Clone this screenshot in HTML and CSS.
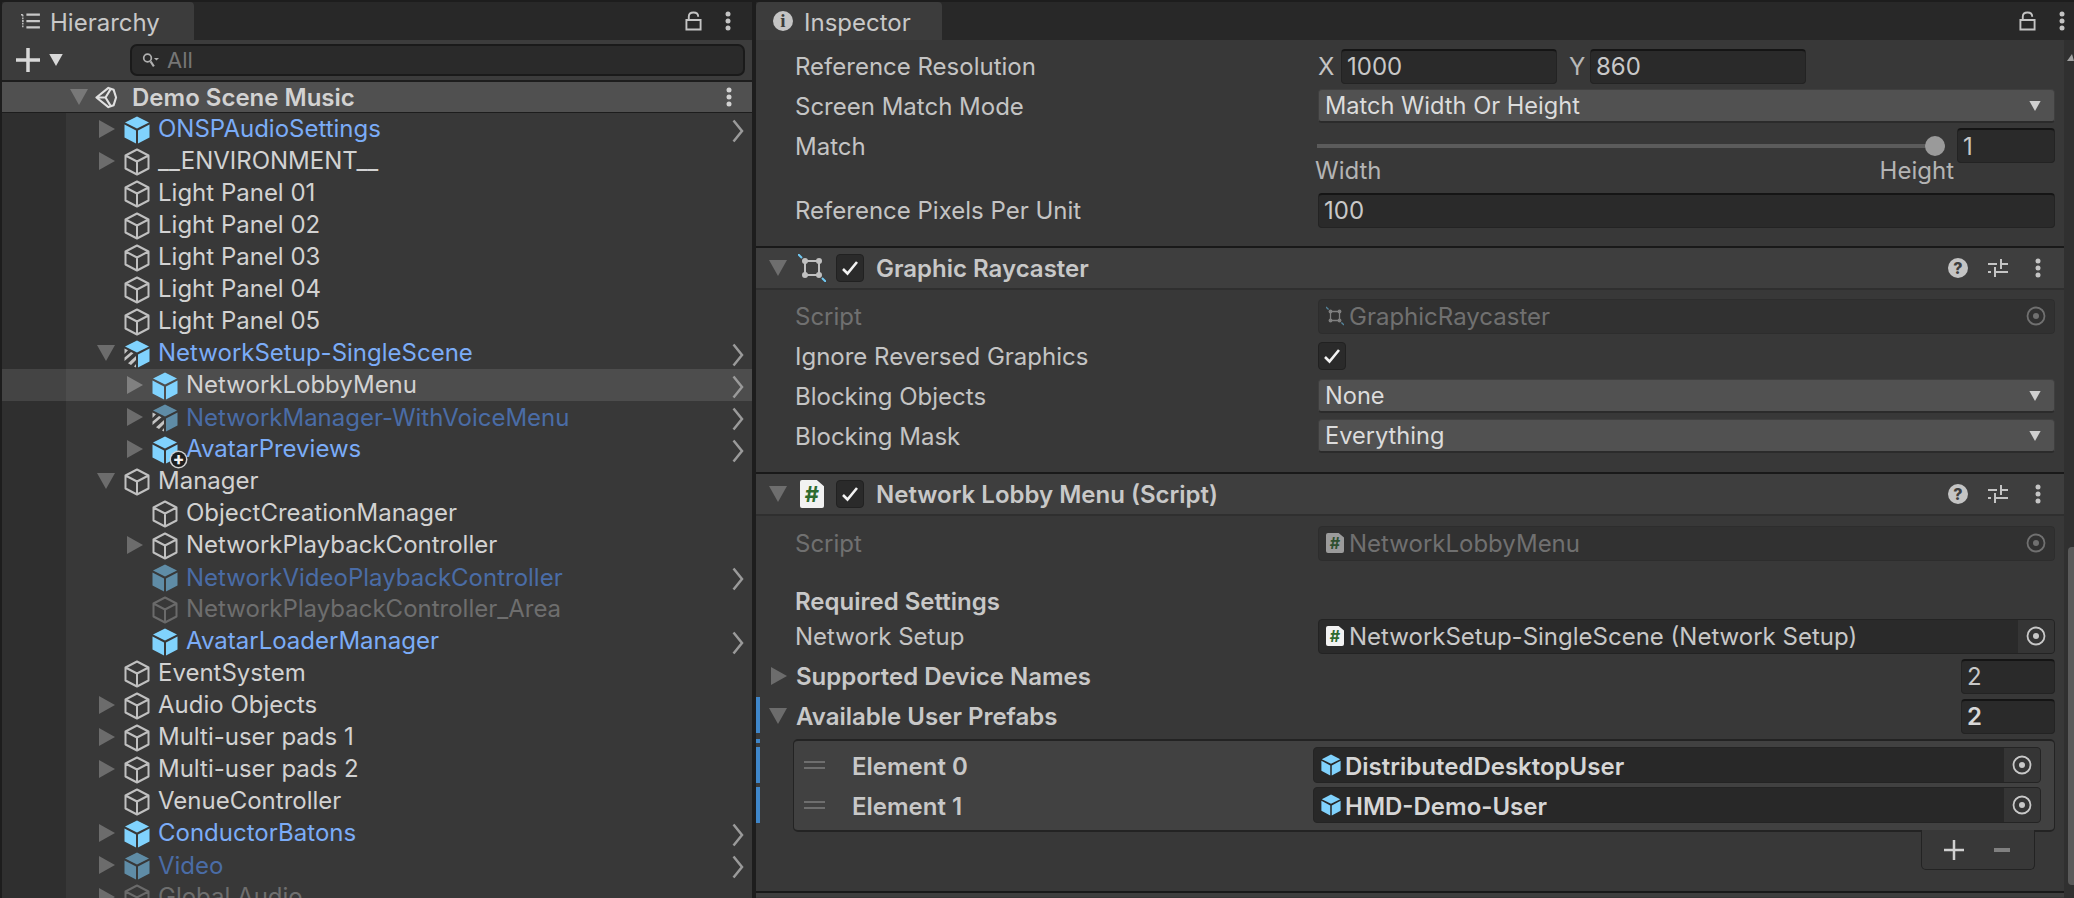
FILE: index.html
```html
<!DOCTYPE html>
<html lang="en">
  <head>
    <meta charset="UTF-8" />
    <title>Unity Editor - Hierarchy and Inspector</title>
    <link rel="stylesheet" href="styles.css">
  </head>

  <body>
    <svg class="icon-defs" aria-hidden="true">
      <symbol id="cube" viewBox="0 0 26 28">
        <path d="M13 1.5 24.5 7.5V20.5L13 26.5 1.5 20.5V7.5ZM1.5 7.5 13 13.5 24.5 7.5M13 13.5V26.5" fill="none" stroke="currentColor" stroke-width="2" stroke-linejoin="round"/>
      </symbol>
      <symbol id="cube-solid" viewBox="0 0 26 28">
        <path d="M13 .5 25 6.5 13 12.5 1 6.5Z" fill="currentColor"/>
        <path d="M.5 8.5 12 14.5V27.5L.5 21.5ZM25.5 8.5 14 14.5V27.5L25.5 21.5Z" fill="currentColor"/>
      </symbol>
      <symbol id="cube-variant" viewBox="0 0 26 28">
        <path d="M13 .5 25 6.5 13 12.5 1 6.5Z" fill="currentColor"/>
        <path d="M25.5 8.5 14 14.5V27.5L25.5 21.5Z" fill="currentColor"/>
        <path class="stripe" d="M.5 8.5 4 10.3.5 14ZM.5 17.5 7 11.9 9.5 13.2.5 21ZM4 23.3 12 16V20L7 24.9ZM10 26.5 12 24V27.5Z" fill="#c4c4c4"/>
      </symbol>
      <symbol id="tri-right" viewBox="0 0 16 18">
        <path d="M0 0 16 9 0 18Z" fill="currentColor"/>
      </symbol>
      <symbol id="tri-down" viewBox="0 0 18 16">
        <path d="M0 0H18L9 16Z" fill="currentColor"/>
      </symbol>
      <symbol id="chevron" viewBox="0 0 12 24">
        <path d="M1.5 1.5 10 12 1.5 22.5" fill="none" stroke="currentColor" stroke-width="2.5"/>
      </symbol>
      <symbol id="lock" viewBox="0 0 18 20">
        <path d="M4 9V5.5C4 2.5 6 1 9 1S14 2.5 14 5.5M1.5 9H16.5V19H1.5Z" fill="none" stroke="currentColor" stroke-width="2"/>
      </symbol>
      <symbol id="dots" viewBox="0 0 6 20">
        <circle cx="3" cy="3" r="2.5" fill="currentColor"/>
        <circle cx="3" cy="10" r="2.5" fill="currentColor"/>
        <circle cx="3" cy="17" r="2.5" fill="currentColor"/>
      </symbol>
      <symbol id="sliders" viewBox="0 0 20 20">
        <path d="M0 6H9M13 6H20M13 1V11M0 14H3M7 14H20M7 9V19" fill="none" stroke="currentColor" stroke-width="2"/>
      </symbol>
      <symbol id="target" viewBox="0 0 20 20">
        <circle cx="10" cy="10" r="8.5" fill="none" stroke="currentColor" stroke-width="1.8"/>
        <circle cx="10" cy="10" r="3" fill="currentColor"/>
      </symbol>
      <symbol id="check" viewBox="0 0 18 16">
        <path d="M2 9 6.5 13.5 16 2" fill="none" stroke="currentColor" stroke-width="2.6"/>
      </symbol>
      <symbol id="transform" viewBox="0 0 28 28">
        <path d="M7 7H21V21H7Z" fill="none" stroke="currentColor" stroke-width="2"/>
        <g fill="currentColor">
          <circle cx="7" cy="7" r="3"/>
          <circle cx="21" cy="7" r="3"/>
          <circle cx="7" cy="21" r="3"/>
          <circle cx="21" cy="21" r="3"/>
        </g>
        <path d="M0 0 4 4M24 24 28 28" stroke="#70c8f2" stroke-width="2"/>
      </symbol>
    </svg>

    <div class="editor">
      <section class="panel hierarchy">
        <div class="tabbar">
          <div class="tab hierarchy-tab">
            <svg class="tab-icon" viewBox="0 0 22 20">
              <path d="M7 3H22M7 10H22M7 17H22" stroke="currentColor" stroke-width="2.5"/>
              <path d="M1 3H4M3 3V17H4M3 10H4" fill="none" stroke="currentColor" stroke-width="1.5" stroke-dasharray="2 1"/>
            </svg>
            Hierarchy
          </div>
          <div class="tabbar-tools">
            <svg class="lock"><use href="#lock"/></svg>
            <svg class="dots"><use href="#dots"/></svg>
          </div>
        </div>

        <div class="toolbar">
          <svg class="add-icon" viewBox="0 0 24 24"><path d="M12 0V24M0 12H24" stroke="currentColor" stroke-width="3.5"/></svg>
          <svg class="add-arrow"><use href="#tri-down"/></svg>
          <div class="search">
            <svg class="search-icon" viewBox="0 0 20 20">
              <circle cx="6.5" cy="7" r="4.5" fill="none" stroke="currentColor" stroke-width="2"/>
              <path d="M10 11 14 17" stroke="currentColor" stroke-width="2.5"/>
              <path d="M14 7H20L17 10Z" fill="currentColor"/>
            </svg>
            All
          </div>
        </div>

        <div class="scene-header">
          <svg class="scene-arrow"><use href="#tri-down"/></svg>
          <svg class="unity-logo" viewBox="0 0 24 24">
            <path d="M2 12 14.5 2 20 4 22.5 12 20 20 14.5 22ZM2 12H11.5L17 3M11.5 12 17 21" fill="none" stroke="currentColor" stroke-width="2.2" stroke-linejoin="round"/>
          </svg>
          <span class="scene-name">Demo Scene Music</span>
          <svg class="dots scene-dots"><use href="#dots"/></svg>
        </div>

        <div class="tree">
          <div class="row depth1 prefab">
            <svg class="arrow"><use href="#tri-right"/></svg>
            <svg class="cube"><use href="#cube-solid"/></svg>
            <span class="name">ONSPAudioSettings</span>
            <svg class="chevron"><use href="#chevron"/></svg>
          </div>
          <div class="row depth1">
            <svg class="arrow"><use href="#tri-right"/></svg>
            <svg class="cube"><use href="#cube"/></svg>
            <span class="name">__ENVIRONMENT__</span>
          </div>
          <div class="row depth1">
            <span class="no-arrow"></span>
            <svg class="cube"><use href="#cube"/></svg>
            <span class="name">Light Panel 01</span>
          </div>
          <div class="row depth1">
            <span class="no-arrow"></span>
            <svg class="cube"><use href="#cube"/></svg>
            <span class="name">Light Panel 02</span>
          </div>
          <div class="row depth1">
            <span class="no-arrow"></span>
            <svg class="cube"><use href="#cube"/></svg>
            <span class="name">Light Panel 03</span>
          </div>
          <div class="row depth1">
            <span class="no-arrow"></span>
            <svg class="cube"><use href="#cube"/></svg>
            <span class="name">Light Panel 04</span>
          </div>
          <div class="row depth1">
            <span class="no-arrow"></span>
            <svg class="cube"><use href="#cube"/></svg>
            <span class="name">Light Panel 05</span>
          </div>
          <div class="row depth1 prefab">
            <svg class="arrow-open"><use href="#tri-down"/></svg>
            <svg class="cube"><use href="#cube-variant"/></svg>
            <span class="name">NetworkSetup-SingleScene</span>
            <svg class="chevron"><use href="#chevron"/></svg>
          </div>
          <div class="row depth2 prefab hovered">
            <svg class="arrow"><use href="#tri-right"/></svg>
            <svg class="cube"><use href="#cube-solid"/></svg>
            <span class="name">NetworkLobbyMenu</span>
            <svg class="chevron"><use href="#chevron"/></svg>
          </div>
          <div class="row depth2 prefab-off">
            <svg class="arrow"><use href="#tri-right"/></svg>
            <svg class="cube"><use href="#cube-variant"/></svg>
            <span class="name">NetworkManager-WithVoiceMenu</span>
            <svg class="chevron"><use href="#chevron"/></svg>
          </div>
          <div class="row depth2 prefab">
            <svg class="arrow"><use href="#tri-right"/></svg>
            <span class="cube-wrap">
              <svg class="cube"><use href="#cube-solid"/></svg>
              <span class="added-badge">+</span>
            </span>
            <span class="name">AvatarPreviews</span>
            <svg class="chevron"><use href="#chevron"/></svg>
          </div>
          <div class="row depth1">
            <svg class="arrow-open"><use href="#tri-down"/></svg>
            <svg class="cube"><use href="#cube"/></svg>
            <span class="name">Manager</span>
          </div>
          <div class="row depth2">
            <span class="no-arrow"></span>
            <svg class="cube"><use href="#cube"/></svg>
            <span class="name">ObjectCreationManager</span>
          </div>
          <div class="row depth2">
            <svg class="arrow"><use href="#tri-right"/></svg>
            <svg class="cube"><use href="#cube"/></svg>
            <span class="name">NetworkPlaybackController</span>
          </div>
          <div class="row depth2 prefab-off">
            <span class="no-arrow"></span>
            <svg class="cube"><use href="#cube-solid"/></svg>
            <span class="name">NetworkVideoPlaybackController</span>
            <svg class="chevron"><use href="#chevron"/></svg>
          </div>
          <div class="row depth2 inactive">
            <span class="no-arrow"></span>
            <svg class="cube"><use href="#cube"/></svg>
            <span class="name">NetworkPlaybackController_Area</span>
          </div>
          <div class="row depth2 prefab">
            <span class="no-arrow"></span>
            <svg class="cube"><use href="#cube-solid"/></svg>
            <span class="name">AvatarLoaderManager</span>
            <svg class="chevron"><use href="#chevron"/></svg>
          </div>
          <div class="row depth1">
            <span class="no-arrow"></span>
            <svg class="cube"><use href="#cube"/></svg>
            <span class="name">EventSystem</span>
          </div>
          <div class="row depth1">
            <svg class="arrow"><use href="#tri-right"/></svg>
            <svg class="cube"><use href="#cube"/></svg>
            <span class="name">Audio Objects</span>
          </div>
          <div class="row depth1">
            <svg class="arrow"><use href="#tri-right"/></svg>
            <svg class="cube"><use href="#cube"/></svg>
            <span class="name">Multi-user pads 1</span>
          </div>
          <div class="row depth1">
            <svg class="arrow"><use href="#tri-right"/></svg>
            <svg class="cube"><use href="#cube"/></svg>
            <span class="name">Multi-user pads 2</span>
          </div>
          <div class="row depth1">
            <span class="no-arrow"></span>
            <svg class="cube"><use href="#cube"/></svg>
            <span class="name">VenueController</span>
          </div>
          <div class="row depth1 prefab">
            <svg class="arrow"><use href="#tri-right"/></svg>
            <svg class="cube"><use href="#cube-solid"/></svg>
            <span class="name">ConductorBatons</span>
            <svg class="chevron"><use href="#chevron"/></svg>
          </div>
          <div class="row depth1 prefab-off">
            <svg class="arrow"><use href="#tri-right"/></svg>
            <svg class="cube"><use href="#cube-solid"/></svg>
            <span class="name">Video</span>
            <svg class="chevron"><use href="#chevron"/></svg>
          </div>
          <div class="row depth1 inactive">
            <svg class="arrow"><use href="#tri-right"/></svg>
            <svg class="cube"><use href="#cube"/></svg>
            <span class="name">Global Audio</span>
          </div>
        </div>
      </section>

      <section class="panel inspector">
        <div class="tabbar">
          <div class="tab inspector-tab">
            <span class="info-icon">i</span>
            Inspector
          </div>
          <div class="tabbar-tools">
            <svg class="lock"><use href="#lock"/></svg>
            <svg class="dots"><use href="#dots"/></svg>
          </div>
        </div>

        <div class="inspector-body">
          <div class="inspector-content">
            <div class="prop first-prop">
              <span class="label">Reference Resolution</span>
              <div class="value xy">
                <span class="axis">X</span>
                <span class="field axis-field">1000</span>
                <span class="axis axis-y">Y</span>
                <span class="field axis-field">860</span>
              </div>
            </div>
            <div class="prop">
              <span class="label">Screen Match Mode</span>
              <div class="value"><div class="dropdown">Match Width Or Height<svg class="drop-arrow"><use href="#tri-down"/></svg></div></div>
            </div>
            <div class="prop match-row">
              <span class="label">Match</span>
              <div class="value slider-wrap">
                <div class="slider-top">
                  <div class="slider-track"><span class="slider-thumb"></span></div>
                  <span class="field slider-field">1</span>
                </div>
                <div class="slider-labels"><span>Width</span><span>Height</span></div>
              </div>
            </div>
            <div class="prop">
              <span class="label">Reference Pixels Per Unit</span>
              <div class="value"><span class="field">100</span></div>
            </div>

            <div class="component first-component">
              <div class="component-header">
                <svg class="comp-arrow"><use href="#tri-down"/></svg>
                <svg class="comp-icon"><use href="#transform"/></svg>
                <span class="checkbox"><svg><use href="#check"/></svg></span>
                <span class="comp-title">Graphic Raycaster</span>
                <div class="comp-tools">
                  <span class="help-icon">?</span>
                  <svg class="sliders"><use href="#sliders"/></svg>
                  <svg class="dots"><use href="#dots"/></svg>
                </div>
              </div>
              <div class="prop comp-first disabled">
                <span class="label">Script</span>
                <div class="value">
                  <div class="object-field">
                    <svg class="field-transform"><use href="#transform"/></svg>
                    <span class="object-name">GraphicRaycaster</span>
                    <span class="target-btn"><svg><use href="#target"/></svg></span>
                  </div>
                </div>
              </div>
              <div class="prop">
                <span class="label">Ignore Reversed Graphics</span>
                <div class="value"><span class="checkbox"><svg><use href="#check"/></svg></span></div>
              </div>
              <div class="prop">
                <span class="label">Blocking Objects</span>
                <div class="value"><div class="dropdown">None<svg class="drop-arrow"><use href="#tri-down"/></svg></div></div>
              </div>
              <div class="prop">
                <span class="label">Blocking Mask</span>
                <div class="value"><div class="dropdown">Everything<svg class="drop-arrow"><use href="#tri-down"/></svg></div></div>
              </div>
            </div>

            <div class="component second-component">
              <div class="component-header">
                <svg class="comp-arrow"><use href="#tri-down"/></svg>
                <span class="script-icon comp-script">#</span>
                <span class="checkbox"><svg><use href="#check"/></svg></span>
                <span class="comp-title">Network Lobby Menu (Script)</span>
                <div class="comp-tools">
                  <span class="help-icon">?</span>
                  <svg class="sliders"><use href="#sliders"/></svg>
                  <svg class="dots"><use href="#dots"/></svg>
                </div>
              </div>
              <div class="prop script-row disabled">
                <span class="label">Script</span>
                <div class="value">
                  <div class="object-field">
                    <span class="script-icon">#</span>
                    <span class="object-name">NetworkLobbyMenu</span>
                    <span class="target-btn"><svg><use href="#target"/></svg></span>
                  </div>
                </div>
              </div>
              <div class="section-title">Required Settings</div>
              <div class="prop">
                <span class="label">Network Setup</span>
                <div class="value">
                  <div class="object-field">
                    <span class="script-icon">#</span>
                    <span class="object-name">NetworkSetup-SingleScene (Network Setup)</span>
                    <span class="target-btn"><svg><use href="#target"/></svg></span>
                  </div>
                </div>
              </div>
              <div class="prop foldout">
                <svg class="fold-arrow"><use href="#tri-right"/></svg>
                <span class="label">Supported Device Names</span>
                <span class="field size-field">2</span>
              </div>
              <div class="prop foldout changed">
                <svg class="fold-arrow-open"><use href="#tri-down"/></svg>
                <span class="label">Available User Prefabs</span>
                <span class="field size-field size-changed">2</span>
              </div>
              <div class="list-box">
                <div class="list-row">
                  <span class="handle"></span>
                  <span class="element-name">Element 0</span>
                  <div class="object-field list-field">
                    <svg class="cube"><use href="#cube-solid"/></svg>
                    <span class="object-name">DistributedDesktopUser</span>
                    <span class="target-btn"><svg><use href="#target"/></svg></span>
                  </div>
                </div>
                <div class="list-row">
                  <span class="handle"></span>
                  <span class="element-name">Element 1</span>
                  <div class="object-field list-field">
                    <svg class="cube"><use href="#cube-solid"/></svg>
                    <span class="object-name">HMD-Demo-User</span>
                    <span class="target-btn"><svg><use href="#target"/></svg></span>
                  </div>
                </div>
              </div>
              <div class="list-footer">
                <svg class="foot-plus" viewBox="0 0 20 20"><path d="M10 0V20M0 10H20" stroke="currentColor" stroke-width="2.5"/></svg>
                <span class="foot-minus"></span>
              </div>
            </div>
            <div class="component-end"></div>
          </div>
          <div class="scrollbar">
            <span class="scroll-up"></span>
            <span class="scroll-thumb"></span>
          </div>
        </div>
      </section>
    </div>
  </body>
</html>
```

FILE: styles.css
```css
* {
  box-sizing: border-box;
}

body {
  margin: 0;
  height: 898px;
  overflow: hidden;
  background-color: #1d1d1d;
  font-family: Inter, "Noto Sans", sans-serif;
  font-size: 24px;
  color: #c4c4c4;
}

.icon-defs {
  display: none;
}

.editor {
  display: flex;
  gap: 4px;
  height: 898px;
  padding: 2px 0 0 2px;
}

.panel {
  display: flex;
  flex-direction: column;
  min-width: 0;
}

.hierarchy {
  width: 750px;
  flex: none;
}

.inspector {
  flex: 1;
}

/* tabs */

.tabbar {
  display: flex;
  align-items: stretch;
  justify-content: space-between;
  height: 38px;
  flex: none;
  background-color: #282828;
  color: #c4c4c4;
}

.tab {
  display: flex;
  align-items: center;
  padding-top: 3px;
  background-color: #3c3c3c;
  border-radius: 4px 4px 0 0;
  color: #c8c8c8;
}

.hierarchy-tab {
  width: 192px;
  padding-left: 17px;
  gap: 9px;
}

.inspector-tab {
  width: 186px;
  padding-left: 17px;
  gap: 11px;
}

.tab-icon {
  width: 22px;
  height: 18px;
  margin-bottom: 3px;
}

.info-icon {
  display: flex;
  align-items: center;
  justify-content: center;
  width: 20px;
  height: 20px;
  margin-bottom: 3px;
  border-radius: 50%;
  background-color: #c4c4c4;
  color: #3c3c3c;
  font-family: "Liberation Serif", serif;
  font-size: 19px;
  font-weight: bold;
}

.tabbar-tools {
  display: flex;
  align-items: center;
  gap: 23px;
  padding-right: 21px;
}

.inspector .tabbar-tools {
  padding-right: 9px;
}

.lock {
  width: 17px;
  height: 20px;
}

.dots {
  width: 6px;
  height: 20px;
}

/* hierarchy */

.toolbar {
  display: flex;
  align-items: center;
  height: 40px;
  flex: none;
  padding-left: 14px;
  background-color: #3c3c3c;
  color: #d8d8d8;
}

.add-icon {
  width: 24px;
  height: 24px;
}

.add-arrow {
  width: 16px;
  height: 12px;
  margin-left: 8px;
}

.search {
  display: flex;
  align-items: center;
  gap: 7px;
  width: 615px;
  height: 32px;
  margin-left: 66px;
  padding-left: 9px;
  background-color: #2a2a2a;
  border: 2px solid #1a1a1a;
  border-radius: 7px;
  color: #767676;
  font-size: 22px;
}

.search-icon {
  width: 19px;
  height: 17px;
  color: #b0b0b0;
}

.scene-header {
  display: flex;
  align-items: center;
  height: 30px;
  flex: none;
  margin-top: 2px;
  padding-left: 68px;
  background-color: #505050;
  color: #d2d2d2;
}

.scene-arrow {
  width: 18px;
  height: 16px;
  color: #787878;
}

.unity-logo {
  width: 24px;
  height: 23px;
  margin-left: 6px;
  color: #e0e0e0;
}

.scene-name {
  margin-left: 14px;
  font-weight: 600;
}

.scene-dots {
  margin-left: auto;
  margin-right: 20px;
}

.tree {
  flex: 1;
  margin-top: 1px;
  overflow: hidden;
  background: linear-gradient(to right, #2f2f2f 64px, #383838 64px);
}

.row {
  display: flex;
  align-items: center;
  height: 32px;
  color: #d2d2d2;
}

.depth1 {
  padding-left: 97px;
}

.depth2 {
  padding-left: 125px;
}

.row.hovered {
  background: linear-gradient(to right, #444444 64px, #4d4d4d 64px);
}

.arrow,
.no-arrow {
  width: 16px;
  height: 18px;
  flex: none;
  color: #6c6c6c;
}

.arrow-open {
  width: 18px;
  height: 16px;
  margin-left: -2px;
  flex: none;
  color: #6c6c6c;
}

.row.hovered .arrow {
  color: #808080;
}

.cube {
  width: 26px;
  height: 28px;
  flex: none;
  margin-left: 9px;
  margin-top: 2px;
  color: #c0c0c0;
}

.cube-wrap {
  position: relative;
  display: flex;
}

.added-badge {
  position: absolute;
  right: -8px;
  bottom: -3px;
  display: flex;
  align-items: center;
  justify-content: center;
  width: 15px;
  height: 15px;
  border-radius: 50%;
  background-color: #1e1e1e;
  box-shadow: 0 0 0 1.5px #d0d0d0;
  color: #f0f0f0;
  font-size: 17px;
  font-weight: 800;
  line-height: 1;
}

.name {
  margin-left: 8px;
  padding-bottom: 2px;
  white-space: nowrap;
}

.chevron {
  width: 12px;
  height: 24px;
  flex: none;
  margin-left: auto;
  margin-right: 8px;
  margin-top: 4px;
  color: #9a9a9a;
}

.prefab {
  color: #7bacf7;
}

.prefab .cube {
  color: #80d2fd;
}

.prefab.hovered {
  color: #d2d2d2;
}

.prefab-off {
  color: #4a6ca6;
}

.prefab-off .cube {
  color: #5f8ca6;
}

.prefab-off .name {
  padding-bottom: 0;
  padding-top: 1px;
}

.prefab-off .stripe {
  opacity: 0.6;
}

.inactive {
  color: #6e6e6e;
}

.inactive .cube {
  color: #6a6a6a;
}

/* inspector */

.inspector-body {
  flex: 1;
  display: flex;
  min-height: 0;
  background-color: #383838;
}

.inspector-content {
  flex: 1;
  min-width: 0;
}

.prop {
  position: relative;
  display: flex;
  align-items: center;
  height: 40px;
  padding-left: 39px;
  padding-right: 9px;
}

.first-prop {
  margin-top: 6px;
}

.label {
  width: 523px;
  flex: none;
  white-space: nowrap;
}

.value {
  flex: 1;
  min-width: 0;
  display: flex;
  align-items: center;
}

.field {
  display: flex;
  align-items: center;
  width: 100%;
  height: 35px;
  padding-left: 5px;
  background-color: #2a2a2a;
  border: 1px solid #232323;
  border-top: 2px solid #151515;
  border-radius: 4px;
  color: #c8c8c8;
}

.xy .axis {
  width: 23px;
  flex: none;
}

.xy .axis-y {
  width: 33px;
  padding-left: 12px;
  color: #b8b8b8;
}

.xy .axis-field {
  width: 216px;
  flex: none;
}

.dropdown {
  display: flex;
  align-items: center;
  justify-content: space-between;
  width: 100%;
  height: 34px;
  padding: 0 12px 0 6px;
  background-color: #515151;
  border: 1px solid #3f3f3f;
  border-bottom: 2px solid #2b2b2b;
  border-radius: 4px;
  font-size: 23.6px;
  color: #dcdcdc;
}

.drop-arrow {
  width: 14px;
  height: 10px;
  color: #d0d0d0;
}

.match-row {
  height: 64px;
  align-items: flex-start;
  padding-top: 2px;
}

.match-row .label {
  line-height: 38px;
}

.slider-wrap {
  flex-direction: column;
  align-items: stretch;
}

.slider-top {
  display: flex;
  align-items: center;
  gap: 12px;
}

.slider-track {
  position: relative;
  flex: 1;
  height: 4px;
  margin-left: -1px;
  background-color: #5b5b5b;
}

.slider-thumb {
  position: absolute;
  right: 0;
  top: -8px;
  width: 20px;
  height: 20px;
  border-radius: 50%;
  background-color: #9a9a9a;
}

.slider-field {
  width: 98px;
  flex: none;
}

.slider-labels {
  display: flex;
  justify-content: space-between;
  margin-left: -3px;
  padding-right: 101px;
  line-height: 16px;
  color: #b4b4b4;
}

.component {
  border-top: 2px solid #191919;
}

.first-component {
  margin-top: 16px;
}

.second-component {
  margin-top: 16px;
}

.component-header {
  display: flex;
  align-items: center;
  height: 42px;
  padding: 0 23px 0 13px;
  background-color: #3e3e3e;
  border-bottom: 2px solid #2f2f2f;
}

.comp-arrow {
  width: 18px;
  height: 16px;
  flex: none;
  color: #6e6e6e;
}

.comp-icon {
  width: 28px;
  height: 28px;
  margin-left: 11px;
  color: #c0c0c0;
}

.component-header .comp-script {
  margin-left: 13px;
  width: 24px;
  height: 28px;
  font-size: 22px;
}

.component-header .comp-script + .checkbox {
  margin-left: 12px;
}

.component-header .checkbox {
  margin-left: 10px;
}

.comp-title {
  margin-left: 12px;
  font-weight: 600;
  color: #c8c8c8;
}

.comp-tools {
  display: flex;
  align-items: center;
  gap: 20px;
  margin-left: auto;
}

.comp-tools .dots {
  margin-left: 7px;
}

.help-icon {
  display: flex;
  align-items: center;
  justify-content: center;
  width: 20px;
  height: 20px;
  border-radius: 50%;
  background-color: #c4c4c4;
  color: #3e3e3e;
  font-size: 16px;
  font-weight: 800;
}

.sliders {
  width: 20px;
  height: 20px;
}

.checkbox {
  display: flex;
  align-items: center;
  justify-content: center;
  width: 28px;
  height: 28px;
  flex: none;
  background-color: #2a2a2a;
  border: 1px solid #212121;
  border-radius: 4px;
  color: #f2f2f2;
}

.checkbox svg {
  width: 18px;
  height: 16px;
}

.comp-first {
  margin-top: 6px;
}

.object-field {
  display: flex;
  align-items: center;
  width: 100%;
  height: 35px;
  padding-left: 7px;
  background-color: #2a2a2a;
  border: 1px solid #232323;
  border-radius: 4px;
  color: #c8c8c8;
  overflow: hidden;
}

.object-name {
  margin-left: 5px;
  white-space: nowrap;
}

.target-btn {
  display: flex;
  align-items: center;
  justify-content: center;
  width: 36px;
  height: 100%;
  margin-left: auto;
  flex: none;
  background-color: #353535;
  color: #c8c8c8;
}

.target-btn svg {
  width: 20px;
  height: 20px;
}

.disabled .label,
.disabled .object-name {
  color: #707070;
}

.disabled .object-field {
  background-color: #313131;
  border-color: #2d2d2d;
}

.disabled .target-btn {
  background-color: #313131;
  color: #707070;
}

.disabled .script-icon,
.field-transform {
  opacity: 0.55;
}

.field-transform {
  width: 18px;
  height: 20px;
  color: #c0c0c0;
}

.script-icon {
  display: flex;
  align-items: center;
  justify-content: center;
  width: 18px;
  height: 20px;
  flex: none;
  background-color: #f2f2f2;
  clip-path: polygon(0 0, 70% 0, 100% 22%, 100% 100%, 0 100%);
  border-radius: 2px;
  color: #2f6b2f;
  font-size: 16px;
  font-weight: 700;
}

.script-row {
  margin-top: 7px;
}

.section-title {
  display: flex;
  align-items: flex-end;
  height: 53px;
  padding-left: 39px;
  font-weight: 600;
  line-height: 28px;
  color: #c8c8c8;
}

.foldout {
  padding-left: 25px;
}

.foldout .label {
  width: auto;
  margin-left: 7px;
  font-weight: 600;
  color: #c8c8c8;
}

.fold-arrow {
  width: 16px;
  height: 18px;
  flex: none;
  margin-left: -10px;
  margin-right: 2px;
  color: #6c6c6c;
}

.fold-arrow-open {
  width: 18px;
  height: 16px;
  flex: none;
  margin-left: -12px;
  margin-right: 2px;
  color: #6c6c6c;
}

.foldout .size-field {
  width: 94px;
  flex: none;
  margin-left: auto;
}

.size-changed {
  font-weight: 600;
  color: #d8d8d8;
}

/* override bars on the left edge */

.changed::before,
.list-box::before,
.list-row::before {
  content: "";
  position: absolute;
  width: 4px;
  background-color: #3f86c9;
}

.changed::before {
  left: 0;
  top: 1px;
  bottom: 3px;
}

.list-box {
  position: relative;
  display: flex;
  flex-direction: column;
  gap: 4px;
  height: 93px;
  margin: 3px 9px 0 37px;
  padding: 6px 13px 7px 0;
  background-color: #414141;
  border: 1px solid #232323;
  border-width: 2px 1px;
  border-radius: 5px;
}

.list-box::before {
  left: -38px;
  top: -2px;
  height: 4px;
}

.list-row {
  position: relative;
  display: flex;
  align-items: center;
  height: 36px;
}

.list-row::before {
  left: -38px;
  top: 0;
  bottom: 0;
}

.handle {
  width: 21px;
  height: 8px;
  flex: none;
  margin-left: 10px;
  border-top: 2px solid #6e6e6e;
  border-bottom: 2px solid #6e6e6e;
}

.element-name {
  flex: 1;
  margin-left: 27px;
  padding-top: 2px;
  font-weight: 600;
  color: #c8c8c8;
}

.list-field {
  width: 728px;
  height: 36px;
  flex: none;
  padding-left: 7px;
  background-color: #282828;
  border-color: #242424;
  font-weight: 600;
  color: #d6d6d6;
}

.list-field .cube {
  width: 20px;
  height: 22px;
  margin-left: 0;
  margin-top: 0;
  color: #80d2fd;
}

.list-field .object-name {
  margin-left: 4px;
  padding-top: 2px;
}

.list-footer {
  position: relative;
  z-index: 1;
  display: flex;
  align-items: center;
  gap: 30px;
  width: 114px;
  height: 40px;
  margin: -2px 29px 0 auto;
  padding-left: 22px;
  background-color: #383838;
  border: 1px solid #232323;
  border-top: 0;
  border-radius: 0 0 5px 5px;
}

.foot-plus {
  width: 20px;
  height: 20px;
  color: #d0d0d0;
}

.foot-minus {
  width: 16px;
  height: 4px;
  background-color: #808080;
}

.component-end {
  height: 6px;
  margin-top: 21px;
  background-color: #3e3e3e;
  border-top: 2px solid #191919;
}

/* scrollbar */

.scrollbar {
  display: flex;
  flex-direction: column;
  align-items: flex-end;
  width: 10px;
  flex: none;
  background-color: #303030;
}

.scroll-up {
  width: 0;
  height: 0;
  margin-top: 14px;
  border: 5px solid transparent;
  border-top: 0;
  border-bottom: 7px solid #a0a0a0;
  border-right-width: 2px;
}

.scroll-thumb {
  width: 6px;
  height: 338px;
  margin-top: 486px;
  background-color: #5a5a5a;
  border-radius: 4px 0 0 4px;
}
```
